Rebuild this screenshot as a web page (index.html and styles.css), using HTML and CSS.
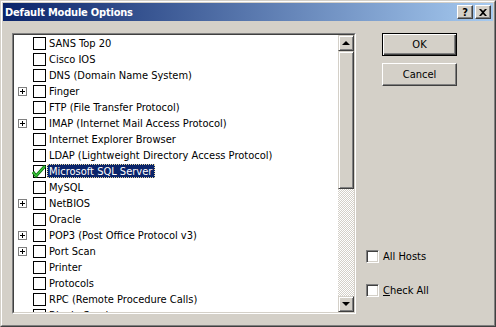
FILE: index.html
```html
<!DOCTYPE html>
<html lang="en">
<head>
  <meta charset="UTF-8" />
  <title>Default Module Options</title>
  <link rel="stylesheet" href="styles.css">
</head>
<body>

  <!-- dialog window -->
  <div class="window">
    <div class="frame">

      <div class="titlebar">
        <span class="title">Default Module Options</span>
        <div class="caption-buttons">
          <div class="cap-btn">?</div>
          <div class="cap-btn">
            <svg width="8" height="7" viewBox="0 0 8 7"><path d="M0 0h2l2 2 2-2h2L5 3.5 8 7H6L4 5 2 7H0l3-3.5z" fill="#000"/></svg>
          </div>
        </div>
      </div>

      <div class="content">

        <div class="listbox">
          <div class="listbox-inner">
            <ul class="tree">
              <li class="row"><span class="exp"></span><span class="box"></span><span class="label">SANS Top 20</span></li>
              <li class="row"><span class="exp"></span><span class="box"></span><span class="label">Cisco IOS</span></li>
              <li class="row"><span class="exp"></span><span class="box"></span><span class="label">DNS (Domain Name System)</span></li>
              <li class="row"><span class="exp plus"></span><span class="box"></span><span class="label">Finger</span></li>
              <li class="row"><span class="exp"></span><span class="box"></span><span class="label">FTP (File Transfer Protocol)</span></li>
              <li class="row"><span class="exp plus"></span><span class="box"></span><span class="label">IMAP (Internet Mail Access Protocol)</span></li>
              <li class="row"><span class="exp"></span><span class="box"></span><span class="label">Internet Explorer Browser</span></li>
              <li class="row"><span class="exp"></span><span class="box"></span><span class="label">LDAP (Lightweight Directory Access Protocol)</span></li>
              <li class="row"><span class="exp"></span><span class="box checked"><svg width="15" height="13" viewBox="0 0 15 13"><path d="M1 7l3 4 9-10" fill="none" stroke="#0b6e0b" stroke-width="3"/><path d="M1 7l3 4 9-10" fill="none" stroke="#3cc83c" stroke-width="1.4"/></svg></span><span class="label selected">Microsoft SQL Server</span></li>
              <li class="row"><span class="exp"></span><span class="box"></span><span class="label">MySQL</span></li>
              <li class="row"><span class="exp plus"></span><span class="box"></span><span class="label">NetBIOS</span></li>
              <li class="row"><span class="exp"></span><span class="box"></span><span class="label">Oracle</span></li>
              <li class="row"><span class="exp plus"></span><span class="box"></span><span class="label">POP3 (Post Office Protocol v3)</span></li>
              <li class="row"><span class="exp plus"></span><span class="box"></span><span class="label">Port Scan</span></li>
              <li class="row"><span class="exp"></span><span class="box"></span><span class="label">Printer</span></li>
              <li class="row"><span class="exp"></span><span class="box"></span><span class="label">Protocols</span></li>
              <li class="row"><span class="exp"></span><span class="box"></span><span class="label">RPC (Remote Procedure Calls)</span></li>
              <li class="row"><span class="exp"></span><span class="box"></span><span class="label">Rlogin Services</span></li>
            </ul>

            <div class="scrollbar">
              <div class="sb-btn"><span class="arrow up"></span></div>
              <div class="sb-thumb"></div>
              <div class="sb-track"></div>
              <div class="sb-btn"><span class="arrow down"></span></div>
            </div>
          </div>
        </div>

        <div class="side">
          <button class="btn default">OK</button>
          <button class="btn">Cancel</button>

          <div class="checks">
            <label class="check"><span class="check-box"></span>All Hosts</label>
            <label class="check"><span class="check-box"></span><span><u>C</u>heck All</span></label>
          </div>
        </div>

      </div>
    </div>
  </div>

</body>
</html>
```

FILE: styles.css
```css
* {
  box-sizing: border-box;
}

body {
  margin: 0;
  padding: 0;
  font-family: "DejaVu Sans Condensed", "DejaVu Sans", sans-serif;
  font-size: 11px;
  color: #000;
  background: #d4d0c8;
}

.window {
  width: 496px;
  height: 327px;
  background: #d4d0c8;
  border: 1px solid;
  border-color: #d4d0c8 #404040 #404040 #d4d0c8;
}

.frame {
  height: 100%;
  border: 1px solid;
  border-color: #fff #808080 #808080 #fff;
  padding: 1px;
}

/* title bar */
.titlebar {
  height: 18px;
  display: flex;
  align-items: center;
  justify-content: space-between;
  padding: 0 2px 0 2px;
  background: linear-gradient(to right, #0a246a, #a6caf0);
}

.title {
  color: #fff;
  font-weight: bold;
  font-size: 11px;
  letter-spacing: -0.2px;
}

.caption-buttons {
  display: flex;
  gap: 2px;
}

.cap-btn {
  width: 16px;
  height: 14px;
  background: #d4d0c8;
  border: 1px solid;
  border-color: #fff #404040 #404040 #fff;
  box-shadow: inset -1px -1px 0 #808080;
  display: flex;
  align-items: center;
  justify-content: center;
  font-weight: bold;
  font-size: 11px;
  line-height: 1;
}

/* main area */
.content {
  display: flex;
  padding: 12px 0 0 9px;
}

.listbox {
  width: 344px;
  height: 281px;
  border: 1px solid;
  border-color: #808080 #fff #fff #808080;
}

.listbox-inner {
  height: 100%;
  display: flex;
  border: 1px solid;
  border-color: #404040 #d4d0c8 #d4d0c8 #404040;
  background: #fff;
}

.tree {
  flex: 1;
  margin: 0;
  padding: 0;
  list-style: none;
  overflow: hidden;
}

.row {
  height: 16px;
  display: flex;
  align-items: center;
  padding-left: 4px;
  white-space: nowrap;
}

.exp {
  width: 9px;
  height: 9px;
  margin-right: 6px;
  position: relative;
}

.exp.plus {
  border: 1px solid #808080;
  background: #fff;
}

.exp.plus::before,
.exp.plus::after {
  content: "";
  position: absolute;
  background: #000;
}

.exp.plus::before {
  left: 1px;
  top: 3px;
  width: 5px;
  height: 1px;
}

.exp.plus::after {
  left: 3px;
  top: 1px;
  width: 1px;
  height: 5px;
}

.box {
  width: 13px;
  height: 13px;
  margin-top: 1px;
  border: 1px solid #000;
  background: #fff;
  position: relative;
  flex-shrink: 0;
}

.box.checked svg {
  position: absolute;
  left: -2px;
  top: -1px;
}

.label {
  margin-left: 1px;
  padding: 1px 2px 0 1px;
  height: 14px;
  line-height: 12px;
  border: 1px solid transparent;
}

.label.selected {
  background: #0a246a;
  color: #fff;
  border: 1px dotted #e8d9a0;
}

/* scrollbar */
.scrollbar {
  width: 16px;
  display: flex;
  flex-direction: column;
}

.sb-btn,
.sb-thumb {
  background: #d4d0c8;
  border: 1px solid;
  border-color: #d4d0c8 #404040 #404040 #d4d0c8;
  box-shadow: inset 1px 1px 0 #fff, inset -1px -1px 0 #808080;
}

.sb-btn {
  height: 16px;
  display: flex;
  align-items: center;
  justify-content: center;
}

.sb-thumb {
  height: 138px;
}

.sb-track {
  flex: 1;
  background: repeating-conic-gradient(#fff 0 25%, #d4d0c8 0 50%) 0 0 / 2px 2px;
}

.arrow {
  width: 0;
  height: 0;
  border-left: 4px solid transparent;
  border-right: 4px solid transparent;
}

.arrow.up {
  border-bottom: 4px solid #000;
}

.arrow.down {
  border-top: 4px solid #000;
}

/* right column */
.side {
  margin-left: 10px;
  width: 110px;
  display: flex;
  flex-direction: column;
}

.btn {
  width: 75px;
  height: 23px;
  margin: 0 0 7px 16px;
  padding: 0;
  font-family: inherit;
  font-size: 11px;
  color: #000;
  background: #d4d0c8;
  border: 1px solid;
  border-color: #fff #404040 #404040 #fff;
  box-shadow: inset -1px -1px 0 #808080;
}

.btn.default {
  border: 1px solid #000;
  box-shadow: inset 1px 1px 0 #fff, inset -1px -1px 0 #404040, inset -2px -2px 0 #808080;
}

.checks {
  margin-top: 157px;
  display: flex;
  flex-direction: column;
  gap: 21px;
}

.check {
  display: flex;
  align-items: center;
  height: 13px;
  gap: 4px;
}

.check-box {
  width: 13px;
  height: 13px;
  background: #fff;
  border: 1px solid;
  border-color: #808080 #fff #fff #808080;
  box-shadow: inset 1px 1px 0 #404040, inset -1px -1px 0 #d4d0c8;
}
```
